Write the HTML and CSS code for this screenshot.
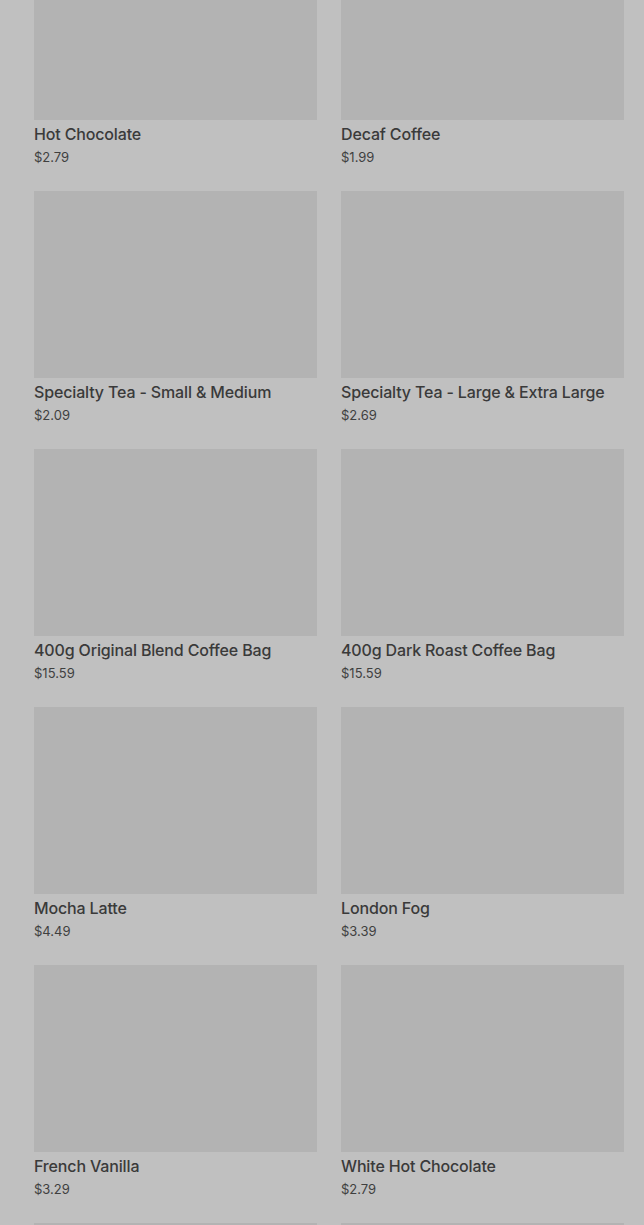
FILE: index.html
```html
<!DOCTYPE html>
<html>
<head>
<meta charset="utf-8">
<link rel="stylesheet" href="styles.css">
</head>
<body>
<div class="grid">
  <div class="card"><div class="img"></div><div class="title">Hot Chocolate</div><div class="price">$2.79</div></div>
  <div class="card"><div class="img"></div><div class="title">Decaf Coffee</div><div class="price">$1.99</div></div>
  <div class="card"><div class="img"></div><div class="title">Specialty Tea - Small &amp; Medium</div><div class="price">$2.09</div></div>
  <div class="card"><div class="img"></div><div class="title">Specialty Tea - Large &amp; Extra Large</div><div class="price">$2.69</div></div>
  <div class="card"><div class="img"></div><div class="title">400g Original Blend Coffee Bag</div><div class="price">$15.59</div></div>
  <div class="card"><div class="img"></div><div class="title">400g Dark Roast Coffee Bag</div><div class="price">$15.59</div></div>
  <div class="card"><div class="img"></div><div class="title">Mocha Latte</div><div class="price">$4.49</div></div>
  <div class="card"><div class="img"></div><div class="title">London Fog</div><div class="price">$3.39</div></div>
  <div class="card"><div class="img"></div><div class="title">French Vanilla</div><div class="price">$3.29</div></div>
  <div class="card"><div class="img"></div><div class="title">White Hot Chocolate</div><div class="price">$2.79</div></div>
  <div class="card"><div class="img"></div><div class="title">&nbsp;</div><div class="price">&nbsp;</div></div>
  <div class="card"><div class="img"></div><div class="title">&nbsp;</div><div class="price">&nbsp;</div></div>
</div>
</body>
</html>
```
FILE: styles.css
```css
html, body {
  margin: 0;
  padding: 0;
  background: #c0c0c0;
  overflow: hidden;
  height: 1225px;
}
.grid {
  display: grid;
  grid-template-columns: 283px 283px;
  column-gap: 24px;
  row-gap: 0;
  padding: 0 20px 0 34px;
  margin-top: -67px;
  font-family: Inter, "Liberation Sans", sans-serif;
  color: #3a3a3a;
}
.card {
  height: 258px;
}
.img {
  height: 187px;
  background: #b3b3b3;
}
.title {
  margin-top: 3px;
  font-size: 16px;
  line-height: 22px;
  font-weight: 500;
  letter-spacing: -0.15px;
  white-space: nowrap;
}
.price {
  margin-top: 3px;
  font-size: 13px;
  line-height: 18px;
  color: #3f3f3f;
}
```
